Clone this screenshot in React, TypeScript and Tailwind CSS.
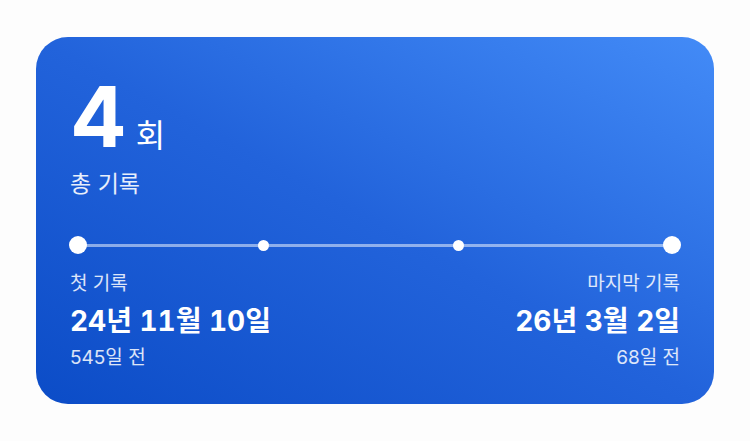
const font = { fontFamily: 'Inter, "Noto Sans CJK KR", sans-serif' };

function Timeline() {
  // dot positions along the line, in percent
  const marks = [31.3, 64];
  return (
    <div className="relative h-[18px] mx-[-1px]">
      <div className="absolute left-[9px] right-[9px] top-[7.5px] h-[3px] rounded-full bg-white/50" />
      <div className="absolute left-0 top-0 w-[18px] h-[18px] rounded-full bg-white" />
      <div className="absolute right-0 top-0 w-[18px] h-[18px] rounded-full bg-white" />
      {marks.map((m) => (
        <div
          key={m}
          className="absolute top-[3.5px] w-[11px] h-[11px] -ml-[5.5px] rounded-full bg-white"
          style={{ left: `calc(9px + (100% - 18px) * ${m / 100})` }}
        />
      ))}
    </div>
  );
}

export default function App() {
  return (
    <div className="h-[441px] w-[750px] bg-[#fdfdfd] px-[36px] py-[37px] flex" style={font}>
      <div className="flex-1 rounded-[32px] bg-gradient-to-tr from-[#0b4cc7] via-[#2263db] to-[#438bf7] px-[34px] pt-[38px] text-white flex flex-col">
        <div className="flex items-baseline gap-[9px]">
          <span className="text-[84px] leading-[84px] font-bold">4</span>
          <span className="text-[32px] leading-none font-normal">회</span>
        </div>
        <div className="mt-[14px] text-[23px] leading-none text-white/90">총 기록</div>
        <div className="mt-[40px]">
          <Timeline />
        </div>
        <div className="mt-[18px] flex justify-between">
          <div className="flex flex-col">
            <span className="text-[19px] leading-[24px] text-white/85">첫 기록</span>
            <span className="mt-[8px] text-[28px] leading-[34px] font-bold tabular-nums">24년 11월 10일</span>
            <span className="mt-[8px] text-[19px] leading-[24px] text-white/85">545일 전</span>
          </div>
          <div className="flex flex-col items-end">
            <span className="text-[19px] leading-[24px] text-white/85">마지막 기록</span>
            <span className="mt-[8px] text-[28px] leading-[34px] font-bold tabular-nums">26년 3월 2일</span>
            <span className="mt-[8px] text-[19px] leading-[24px] text-white/85">68일 전</span>
          </div>
        </div>
      </div>
    </div>
  );
}
